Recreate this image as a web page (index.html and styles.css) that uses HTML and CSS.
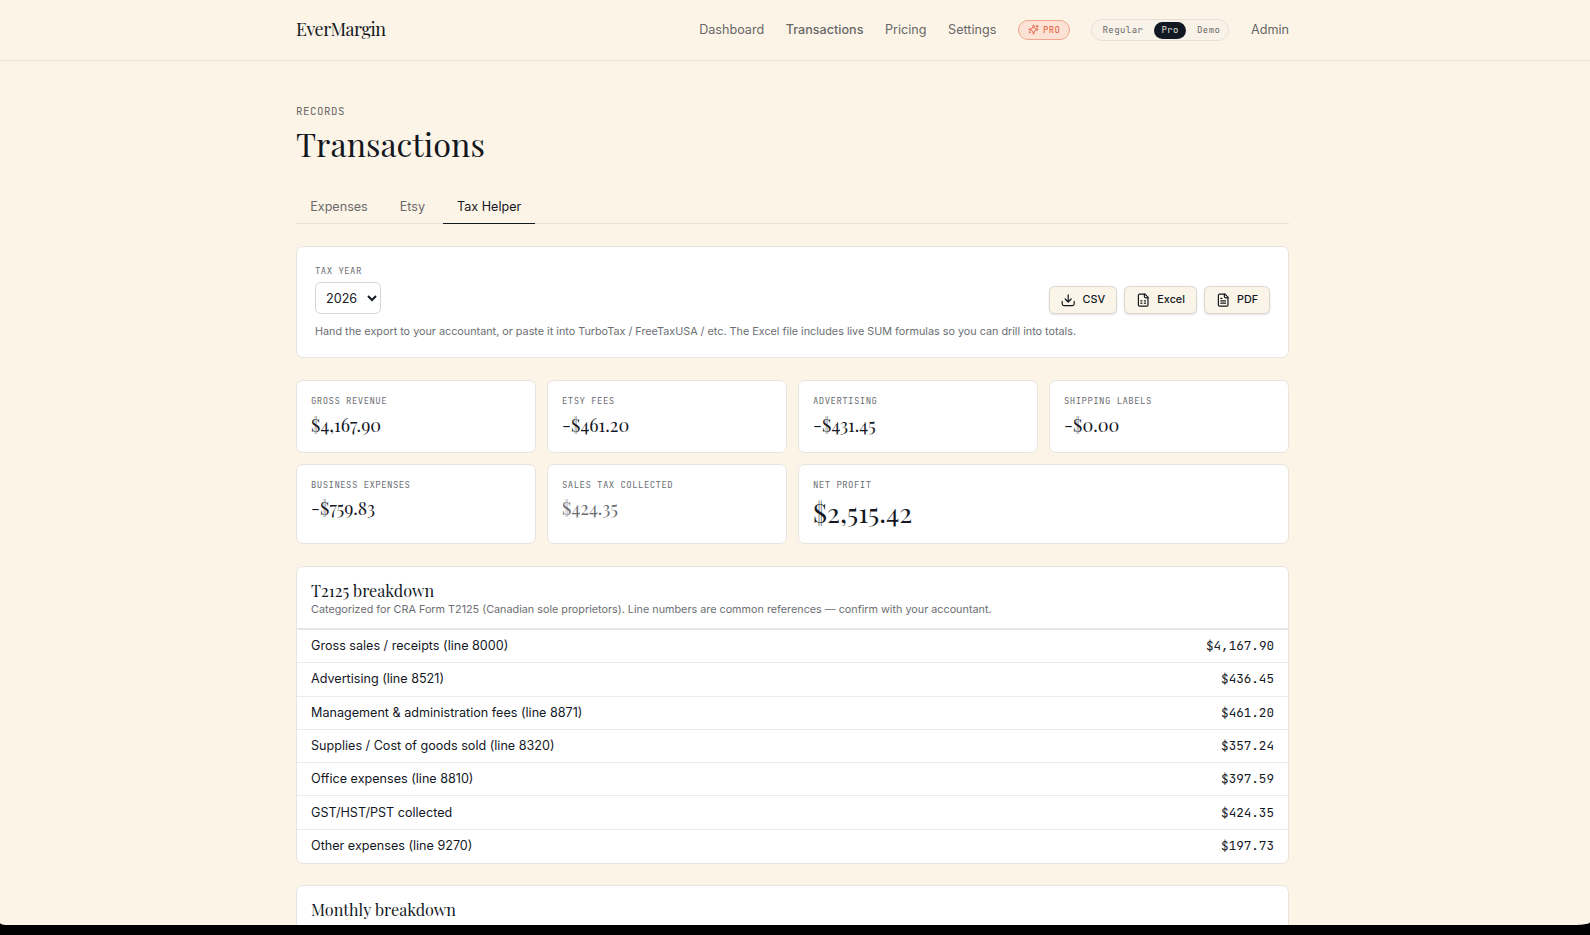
FILE: index.html
```
<!DOCTYPE html>
<html lang="en">
<head>
  <meta charset="UTF-8">
  <title>Transactions - EverMargin</title>
  <link rel="stylesheet" href="styles.css">
</head>
<body>

<div class="window">

  <header class="header">
    <div class="container header-row">
      <a class="logo">EverMargin</a>
      <nav class="nav">
        <a>Dashboard</a>
        <a class="current">Transactions</a>
        <a>Pricing</a>
        <a>Settings</a>
        <span class="pro-badge">
          <svg viewBox="0 0 24 24"><path d="M9.9 15.5A2 2 0 0 0 8.5 14.1l-6.1-1.6a.5.5 0 0 1 0-1L8.5 9.9A2 2 0 0 0 9.9 8.5l1.6-6.1a.5.5 0 0 1 1 0L14.1 8.5A2 2 0 0 0 15.5 9.9l6.1 1.6a.5.5 0 0 1 0 1L15.5 14.1a2 2 0 0 0-1.4 1.4l-1.6 6.1a.5.5 0 0 1-1 0z"/><path d="M20 3v4M22 5h-4M4 17v2M5 18H3"/></svg>
          PRO
        </span>
        <div class="mode">
          <span>Regular</span>
          <span class="on">Pro</span>
          <span>Demo</span>
        </div>
        <a>Admin</a>
      </nav>
    </div>
  </header>

  <main class="container">
    <p class="eyebrow">RECORDS</p>
    <h1>Transactions</h1>

    <div class="tabs">
      <a class="tab">Expenses</a>
      <a class="tab">Etsy</a>
      <a class="tab active">Tax Helper</a>
    </div>

    <section class="card export">
      <div class="export-row">
        <div>
          <label class="label" for="year">TAX YEAR</label>
          <select id="year"><option>2026</option></select>
        </div>
        <div class="buttons">
          <button><svg viewBox="0 0 24 24"><path d="M12 3v12M7 10l5 5 5-5M2 14v4a3 3 0 0 0 3 3h14a3 3 0 0 0 3-3v-4"/></svg>CSV</button>
          <button><svg viewBox="0 0 24 24"><path d="M15 2H6a2 2 0 0 0-2 2v16a2 2 0 0 0 2 2h12a2 2 0 0 0 2-2V7z"/><path d="M14 2v4a2 2 0 0 0 2 2h4M8 13h2M14 13h2M8 17h2M14 17h2"/></svg>Excel</button>
          <button><svg viewBox="0 0 24 24"><path d="M15 2H6a2 2 0 0 0-2 2v16a2 2 0 0 0 2 2h12a2 2 0 0 0 2-2V7z"/><path d="M14 2v4a2 2 0 0 0 2 2h4M10 9H8M16 13H8M16 17H8"/></svg>PDF</button>
        </div>
      </div>
      <p class="hint">Hand the export to your accountant, or paste it into TurboTax / FreeTaxUSA / etc. The Excel file includes live SUM formulas so you can drill into totals.</p>
    </section>

    <section class="stats">
      <div class="card stat"><div class="label">GROSS REVENUE</div><div class="value">$4,167.90</div></div>
      <div class="card stat"><div class="label">ETSY FEES</div><div class="value">-$461.20</div></div>
      <div class="card stat"><div class="label">ADVERTISING</div><div class="value">-$431.45</div></div>
      <div class="card stat"><div class="label">SHIPPING LABELS</div><div class="value">-$0.00</div></div>
      <div class="card stat second"><div class="label">BUSINESS EXPENSES</div><div class="value">-$759.83</div></div>
      <div class="card stat second"><div class="label">SALES TAX COLLECTED</div><div class="value muted">$424.35</div></div>
      <div class="card stat second net"><div class="label">NET PROFIT</div><div class="value big">$2,515.42</div></div>
    </section>

    <section class="card table">
      <div class="table-head">
        <h2>T2125 breakdown</h2>
        <p>Categorized for CRA Form T2125 (Canadian sole proprietors). Line numbers are common references — confirm with your accountant.</p>
      </div>
      <div class="row"><span>Gross sales / receipts (line 8000)</span><span class="amount">$4,167.90</span></div>
      <div class="row"><span>Advertising (line 8521)</span><span class="amount">$436.45</span></div>
      <div class="row"><span>Management &amp; administration fees (line 8871)</span><span class="amount">$461.20</span></div>
      <div class="row"><span>Supplies / Cost of goods sold (line 8320)</span><span class="amount">$357.24</span></div>
      <div class="row"><span>Office expenses (line 8810)</span><span class="amount">$397.59</span></div>
      <div class="row"><span>GST/HST/PST collected</span><span class="amount">$424.35</span></div>
      <div class="row"><span>Other expenses (line 9270)</span><span class="amount">$197.73</span></div>
    </section>

    <section class="card table">
      <div class="table-head">
        <h2>Monthly breakdown</h2>
      </div>
    </section>
  </main>

</div>

</body>
</html>
```
FILE: styles.css
```
* {
  box-sizing: border-box;
}
body {
  margin: 0;
  background: #000;
  font-family: Inter, sans-serif;
  font-size: 12.6px;
  color: #14181f;
  overflow: hidden;
}
h1, h2, p {
  margin: 0;
  font-weight: 400;
}
svg {
  fill: none;
  stroke: currentColor;
  stroke-width: 2;
  stroke-linecap: round;
  stroke-linejoin: round;
}
.window {
  height: 925px;
  overflow: hidden;
  background: #fcf4e7;
  border-radius: 0 0 14px 8px / 0 0 3px 2px;
}
.container {
  width: 993px;
  margin-left: 296px;
}

/* header */
.header {
  height: 61px;
  border-bottom: 1px solid #e8e1d7;
}
.header-row {
  height: 60px;
  display: flex;
  align-items: center;
  justify-content: space-between;
}
.logo {
  padding-bottom: 2px;
  font-family: "Playfair Display", "Liberation Serif", serif;
  font-size: 18px;
  letter-spacing: -0.5px;
}
.nav {
  display: flex;
  align-items: center;
  gap: 21.6px;
  color: #686868;
}
.nav a {
  padding-bottom: 1px;
}
.nav .current {
  font-weight: 500;
}
.pro-badge {
  display: flex;
  align-items: center;
  gap: 4px;
  height: 20px;
  width: 52px;
  padding: 0 0 1px 9px;
  border: 1px solid #efa58f;
  border-radius: 10px;
  background: #fbe2d4;
  color: #e2583a;
  font: 9px "JetBrains Mono", "DejaVu Sans Mono", monospace;
  letter-spacing: 0.45px;
}
.pro-badge svg {
  width: 11px;
  height: 11px;
}
.mode {
  display: flex;
  align-items: center;
  width: 138px;
  height: 22px;
  padding: 0 0 0 2px;
  border: 1px solid #e6dfd5;
  border-radius: 11px;
  background: #f8f2e8;
  font: 9px "JetBrains Mono", "DejaVu Sans Mono", monospace;
  letter-spacing: 0.45px;
}
.mode span {
  height: 17px;
  line-height: 16px;
  padding: 0 7px 0 8px;
  border-radius: 9px;
}
.mode .on {
  background: #121923;
  color: #e8e4dc;
  margin: 0 3px 0 4px;
  padding-left: 7px;
}

/* page title */
.eyebrow {
  padding-top: 44px;
  font: 10.8px/13px "JetBrains Mono", "DejaVu Sans Mono", monospace;
  letter-spacing: 0.54px;
  color: #6b6b6b;
}
h1 {
  margin-top: 5px;
  font: 32.4px/42px "Playfair Display", "Liberation Serif", serif;
}
.tabs {
  display: flex;
  gap: 3.6px;
  margin-top: 25px;
  height: 34px;
  border-bottom: 1px solid #e8e1d7;
}
.tab {
  height: 34px;
  padding: 0 14.2px;
  line-height: 33px;
  color: #6b6b6b;
}
.tab.active {
  color: #14181f;
  border-bottom: 1px solid #14181f;
}

/* cards */
.card {
  background: #fff;
  border: 1px solid #e8e5e1;
  border-radius: 7px;
}
.label {
  display: block;
  font: 9px/12px "JetBrains Mono", "DejaVu Sans Mono", monospace;
  letter-spacing: 0.45px;
  color: #6b6e73;
}
.export {
  height: 112px;
  margin-top: 22px;
  padding: 18px;
}
.export-row {
  display: flex;
  justify-content: space-between;
  align-items: flex-end;
}
select {
  display: block;
  width: 66px;
  height: 32px;
  margin-top: 5px;
  padding: 0 0 0 6px;
  border: 1px solid #d5d5d5;
  border-radius: 5.5px;
  background: #fff;
  color: #14181f;
  font: 12.6px Inter, sans-serif;
}
.buttons {
  display: flex;
  gap: 7px;
}
button {
  display: flex;
  align-items: center;
  gap: 7.2px;
  height: 28px;
  padding: 0 10.8px 1px;
  border: 1px solid #ddd8cf;
  border-radius: 5.5px;
  background: #fbf5e9;
  box-shadow: 0 1px 2px rgba(0, 0, 0, 0.12);
  color: #14181f;
  font: 500 10.8px Inter, sans-serif;
}
button svg {
  width: 14.4px;
  height: 14.4px;
  margin-top: 2px;
}
.hint {
  margin-top: 10px;
  font-size: 10.8px;
  line-height: 16px;
  color: #6b6e73;
}

/* numbers */
.stats {
  display: grid;
  grid-template-columns: repeat(4, 1fr);
  grid-template-rows: 73px 80px;
  gap: 11px;
  margin-top: 22px;
}
.stat {
  padding: 14px 14px 0;
}
.net {
  grid-column: span 2;
}
.value {
  margin-top: 6px;
  font: 18px/25px "Playfair Display", "Liberation Serif", serif;
}
.second .value {
  margin-top: 5px;
}
.value.muted {
  color: #6b6e73;
}
.value.big {
  font-size: 27px;
  line-height: 33px;
}

/* tables */
.table {
  margin-top: 22px;
}
.table + .table {
  margin-top: 21.3px;
}
.table-head {
  height: 63px;
  padding: 13px 14px 0;
  border-bottom: 2px solid #e6e6e6;
}
h2 {
  font: 16.2px/20px "Playfair Display", "Liberation Serif", serif;
}
.table-head p {
  margin-top: 2px;
  font-size: 10.8px;
  line-height: 16px;
  color: #6b6e73;
}
.row {
  display: flex;
  justify-content: space-between;
  align-items: center;
  height: 33.3px;
  padding: 0 14px 1px;
  border-bottom: 1px solid #ebebeb;
}
.row:last-child {
  border-bottom: none;
}
.amount {
  font: 12.6px "JetBrains Mono", "DejaVu Sans Mono", monospace;
}
```
